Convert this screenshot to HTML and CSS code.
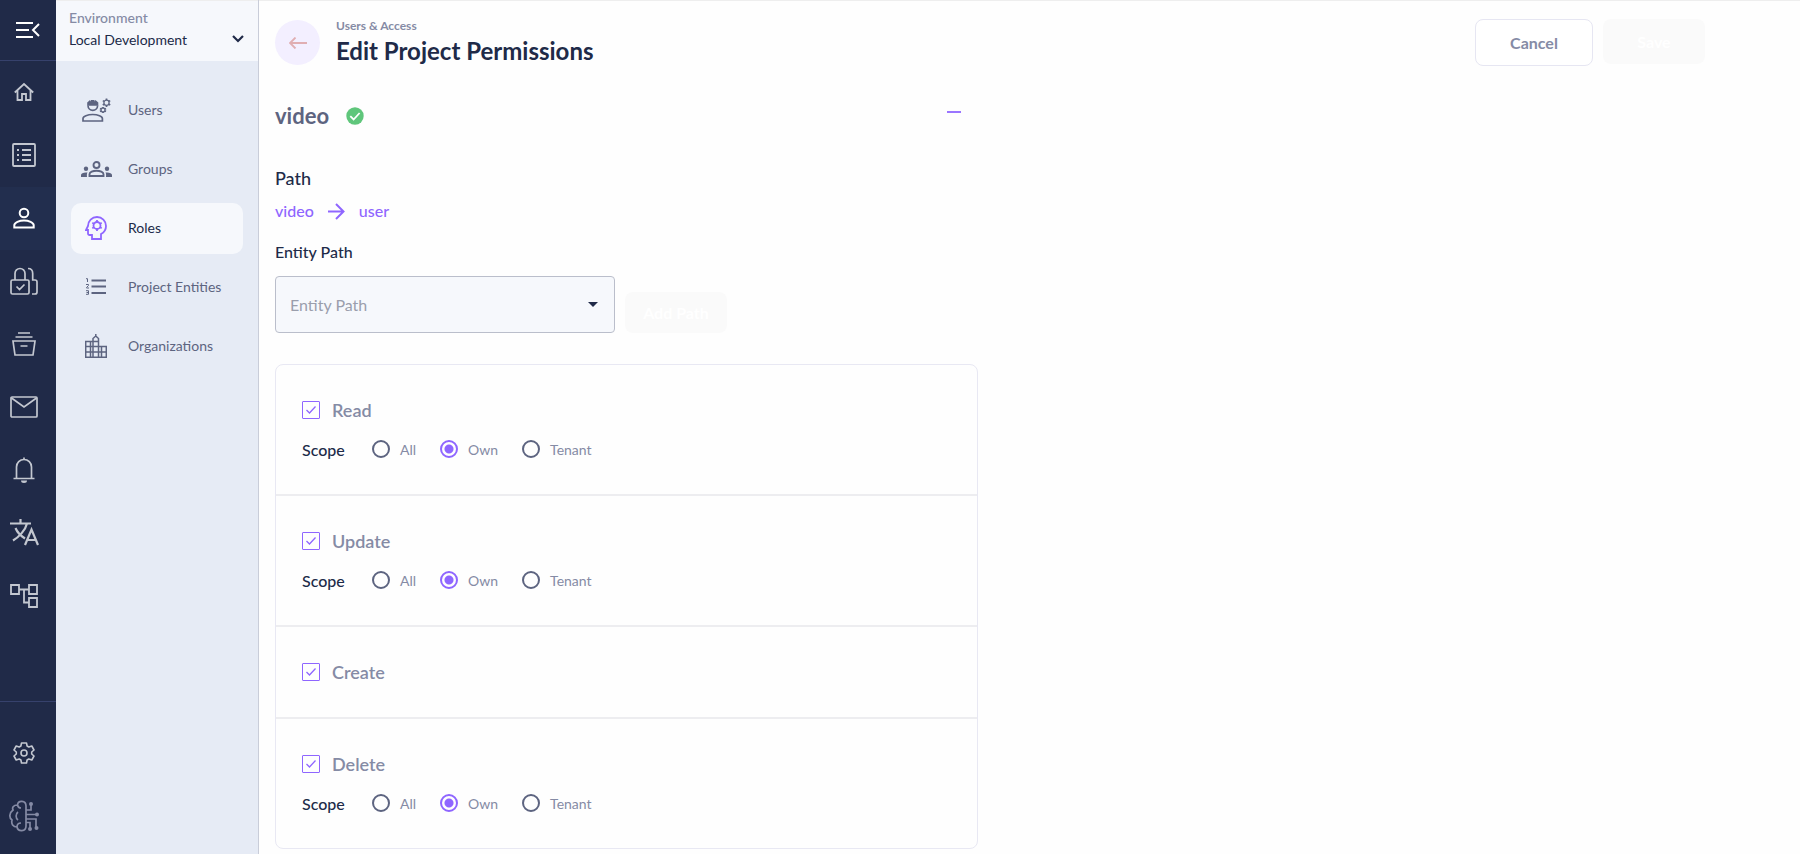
FILE: index.html
```html
<!DOCTYPE html>
<html lang="en">
<head>
    <meta charset="UTF-8">
    <meta name="viewport" content="width=device-width, initial-scale=1.0">
    <title>Edit Project Permissions</title>
    <link rel="stylesheet" href="styles.css">
</head>
<body>
    <nav class="rail">
        <button class="rail-toggle" aria-label="Collapse menu">
            <svg width="24" height="18" viewBox="0 0 24 18" fill="none" stroke="currentColor" stroke-width="2"><path d="M0 2h17M0 9h13M0 16h17M23 3l-6 6 6 6"/></svg>
        </button>
        <a class="rail-item" href="#" aria-label="Home">
            <svg width="20" height="20" viewBox="0 0 20 20" fill="none" stroke="currentColor" stroke-width="1.800"><path d="M.8 10.500L10 2l9.200 8.500M3.500 8.500V18H8v-6h4v6h4.500V8.500"/></svg>
        </a>
        <a class="rail-item" href="#" aria-label="Lists">
            <svg width="24" height="24" viewBox="0 0 24 24" fill="none" stroke="currentColor" stroke-width="1.800"><rect x="1" y="1" width="22" height="22" rx="1"/><path d="M5 7h2M5 12h2M5 17h2M10 7h9M10 12h9M10 17h9"/></svg>
        </a>
        <a class="rail-item active" href="#" aria-label="Users">
            <svg width="22" height="22" viewBox="0 0 22 22" fill="none" stroke="currentColor" stroke-width="2"><circle cx="11" cy="6" r="4.300"/><path d="M1.300 20.500v-2.300c0-2.600 5-4.700 9.700-4.700s9.700 2.100 9.700 4.700v2.300z"/></svg>
        </a>
        <a class="rail-item" href="#" aria-label="Security">
            <svg width="28" height="28" viewBox="0 0 28 28" fill="none" stroke="currentColor" stroke-width="1.700"><rect x="1" y="13" width="18" height="14" rx="1.500"/><path d="M5 13V6.500a5 5 0 0 1 10 0V13M6.500 19.500l3 3 5-5M18 1.500c3 0 4.700 2 4.700 5V13H25a2 2 0 0 1 2 2v10a2 2 0 0 1-2 2h-3"/></svg>
        </a>
        <a class="rail-item" href="#" aria-label="Archive">
            <svg width="24" height="24" viewBox="0 0 24 24" fill="none" stroke="currentColor" stroke-width="1.700"><path d="M6 1h12M3.500 5h17M1 9h22l-2 14H3zM8.500 14h7"/></svg>
        </a>
        <a class="rail-item" href="#" aria-label="Messages">
            <svg width="28" height="22" viewBox="0 0 28 22" fill="none" stroke="currentColor" stroke-width="1.700"><rect x="1" y="1" width="26" height="20" rx="1"/><path d="M1.500 2L14 11 26.500 2"/></svg>
        </a>
        <a class="rail-item" href="#" aria-label="Notifications">
            <svg width="22" height="26" viewBox="0 0 22 26" fill="none" stroke="currentColor" stroke-width="1.700"><path d="M.5 21.500h21M3.500 21V10a7.500 7.500 0 0 1 15 0v11M11 .5V3"/><path d="M8 23.500h6a3 2.500 0 0 1-6 0z" fill="currentColor" stroke="none"/></svg>
        </a>
        <a class="rail-item" href="#" aria-label="Language">
            <svg width="29" height="27" viewBox="0 0 29 27" fill="none" stroke="currentColor" stroke-width="2.200"><path d="M0 4.500h21M10.500 0v4M17 4.500C15.500 11 9 18 3 21.500M5.500 9c2 5 5.500 8 9.500 10.500M15 26l6.500-15.500L28 26M17.500 21h8"/></svg>
        </a>
        <a class="rail-item" href="#" aria-label="Workflows">
            <svg width="28" height="24" viewBox="0 0 28 24" fill="none" stroke="currentColor" stroke-width="1.800"><path d="M1 1h8v9H1zM19 1h8v9h-8zM19 14h8v9h-8zM9 5.500h10M14 5.500v13h5"/></svg>
        </a>
        <div class="rail-bottom">
            <a class="rail-item" href="#" aria-label="Settings">
                <svg width="22" height="22" viewBox="0 0 22 22" fill="none" stroke="currentColor" stroke-width="1.600" stroke-linejoin="round"><path d="M8.500 1h5l.6 3 1.700 1 3-1 2.200 4-2.300 2v2l2.300 2-2.200 4-3-1-1.700 1-.6 3h-5l-.6-3-1.700-1-3 1L1 14l2.300-2v-2L1 8l2.200-4 3 1 1.700-1z"/><circle cx="11" cy="11" r="3"/></svg>
            </a>
            <a class="rail-item dim" href="#" aria-label="Intelligence">
                <svg width="30" height="32" viewBox="0 0 30 32" fill="none" stroke="currentColor" stroke-width="1.700"><path d="M17 6c0-6-8-6-8.500-1C4 5 3 8 4 10c-4 3-4 8-1 10-1 4 1 7 5 7 1 5 9 5 9-1zM12 8c-1.500 0-3-.5-3.500-3M12 23c-2.500 0-4 1.500-4 4M9 12c-2.500 2-2.500 6 0 8M17 10h5V4M17 14.500h10M17 19h10v8M17 22.500h4V28"/><g fill="currentColor" stroke="none"><circle cx="22" cy="4" r="2"/><circle cx="28" cy="14.500" r="2"/><circle cx="27.500" cy="28" r="2"/><circle cx="21" cy="29" r="2"/></g></svg>
            </a>
        </div>
    </nav>

    <aside class="sidebar">
        <div class="environment">
            <label for="environment">Environment</label>
            <select id="environment">
                <option>Local Development</option>
            </select>
            <svg class="env-arrow" width="12" height="8" viewBox="0 0 12 8" fill="none" stroke="currentColor" stroke-width="2.200"><path d="M1 1l5 5 5-5"/></svg>
        </div>
        <div class="menu">
            <a class="menu-item" href="#">
                <span class="menu-icon"><svg width="29" height="24" viewBox="0 0 29 24" fill="none" stroke="currentColor" stroke-width="1.700"><path d="M1 23v-2.500c0-2.200 4.500-4 9.700-4s9.700 1.800 9.700 4V23zM6 7.500a4.800 4.800 0 0 0 9.600 0"/><path d="M5.200 7.800V4.500L8 2l1 1.500V2h3.500v1.500l1-1.500 2.800 2.500v3.300z" fill="currentColor" stroke="none"/><path d="M24.500 .5v1.500M24.500 7.500v1.500M20.800 2.600l1.300.8M26.900 6.200l1.300.8M20.800 7l1.300-.8M26.900 3.400l1.300-.8M21 9v1M21 14v1M18 10.500l1 .6M23 13l1 .6M18 13.500l1-.6M23 11l1-.6"/><circle cx="24.500" cy="4.800" r="2.600" stroke-width="1.300"/><circle cx="21" cy="12" r="2" stroke-width="1.300"/></svg></span>
                Users
            </a>
            <a class="menu-item" href="#">
                <span class="menu-icon"><svg width="31" height="16" viewBox="0 0 31 16" fill="none" stroke="currentColor" stroke-width="1.900"><circle cx="15.500" cy="4" r="3"/><path d="M8.500 15v-1.800c0-2 3.500-3.500 7-3.500s7 1.500 7 3.500V15z"/><g fill="currentColor" stroke="none"><circle cx="5" cy="7.700" r="2.200"/><circle cx="26" cy="7.700" r="2.200"/><path d="M0 16v-2c0-1.800 3-3 6.500-2.500C5.800 12.500 5.800 14 6 16zM31 16v-2c0-1.800-3-3-6.500-2.500.7 1 .7 2.500.5 4.500z"/></g></svg></span>
                Groups
            </a>
            <a class="menu-item selected" href="#">
                <span class="menu-icon"><svg width="22" height="24" viewBox="0 0 22 24" fill="none" stroke="currentColor" stroke-width="1.800"><path d="M7 23v-4H4.500a1.500 1.500 0 0 1-1.500-1.500V14H1l2-4c0-5 4-9 9-9s9 4 9 9c0 3.500-2 6.500-5 8v5z"/><circle cx="12" cy="9.500" r="3.500"/><path d="M12 4v2M12 13v2M7.300 6.800l1.700 1M15 11.200l1.700 1M7.300 12.200l1.700-1M15 7.800l1.700-1"/></svg></span>
                Roles
            </a>
            <a class="menu-item" href="#">
                <span class="menu-icon"><svg width="20" height="17" viewBox="0 0 20 17" fill="none" stroke="currentColor"><path d="M5.500 2.500H20M5.500 8.500H20M5.500 15H20" stroke-width="2"/><path d="M0 .7h1.500V4M0 6.500h2.500v1L.5 9.500v.5H3M0 12.700h2.500v3.600H0M.5 14.500h2"/></svg></span>
                Project Entities
            </a>
            <a class="menu-item" href="#">
                <span class="menu-icon"><svg width="22" height="24" viewBox="0 0 22 24" fill="none" stroke="currentColor" stroke-width="1.500"><path d="M.7 23.300V7.500h7M.7 12.500h20.600v10.800H.7zM.7 18h20.600M5.500 7.500v15.800M8 23V4.500L10.800 2l2.700 2.500V23M10.800 0v2M16.500 12.500v10.800M8 7.500h5.500"/></svg></span>
                Organizations
            </a>
        </div>
    </aside>

    <main class="content">
        <header class="page-header">
            <button class="back" aria-label="Back">
                <svg width="18" height="12" viewBox="0 0 18 12" fill="none" stroke="currentColor" stroke-width="1.800"><path d="M18 6H1M6.500 .5L1 6l5.500 5.500"/></svg>
            </button>
            <div class="titles">
                <span class="crumb">Users &amp; Access</span>
                <h1>Edit Project Permissions</h1>
            </div>
            <div class="actions">
                <button class="cancel">Cancel</button>
                <button class="primary save" disabled>Save</button>
            </div>
        </header>

        <form class="permissions">
            <div class="project">
                <h2>video</h2>
                <svg width="18" height="18" viewBox="0 0 18 18"><circle cx="9" cy="9" r="8.700" fill="#5fc67b"/><path d="M4.300 9.200l3.300 3.300 6-6.500" fill="none" stroke="#fff" stroke-width="1.800"/></svg>
                <button class="collapse" type="button" aria-label="Collapse"></button>
            </div>

            <h3>Path</h3>
            <div class="path">
                <span>video</span>
                <svg width="17" height="17" viewBox="0 0 17 17" fill="none" stroke="currentColor" stroke-width="2"><path d="M0 8.500h16M8 1l7.500 7.500L8 16"/></svg>
                <span>user</span>
            </div>

            <label class="field-label" for="entityPath">Entity Path</label>
            <div class="field-row">
                <div class="select">
                    <select id="entityPath">
                        <option>Entity Path</option>
                    </select>
                    <svg class="caret" width="10" height="5" viewBox="0 0 10 5"><path d="M0 0h10L5 5z" fill="currentColor"/></svg>
                </div>
                <button class="primary add-path" type="button" disabled>Add Path</button>
            </div>

            <div class="card">
                <section>
                    <label class="permission"><input type="checkbox" checked><svg class="tick" width="10" height="8" viewBox="0 0 10 8"><path d="M.5 4l3 3 6-6.500"/></svg>Read</label>
                    <div class="scope" role="radiogroup" aria-label="Read scope">
                        <span class="scope-name">Scope</span>
                        <label><input type="radio" name="read">All</label>
                        <label><input type="radio" name="read" checked>Own</label>
                        <label><input type="radio" name="read">Tenant</label>
                    </div>
                </section>
                <section>
                    <label class="permission"><input type="checkbox" checked><svg class="tick" width="10" height="8" viewBox="0 0 10 8"><path d="M.5 4l3 3 6-6.500"/></svg>Update</label>
                    <div class="scope" role="radiogroup" aria-label="Update scope">
                        <span class="scope-name">Scope</span>
                        <label><input type="radio" name="update">All</label>
                        <label><input type="radio" name="update" checked>Own</label>
                        <label><input type="radio" name="update">Tenant</label>
                    </div>
                </section>
                <section>
                    <label class="permission"><input type="checkbox" checked><svg class="tick" width="10" height="8" viewBox="0 0 10 8"><path d="M.5 4l3 3 6-6.500"/></svg>Create</label>
                </section>
                <section>
                    <label class="permission"><input type="checkbox" checked><svg class="tick" width="10" height="8" viewBox="0 0 10 8"><path d="M.5 4l3 3 6-6.500"/></svg>Delete</label>
                    <div class="scope" role="radiogroup" aria-label="Delete scope">
                        <span class="scope-name">Scope</span>
                        <label><input type="radio" name="delete">All</label>
                        <label><input type="radio" name="delete" checked>Own</label>
                        <label><input type="radio" name="delete">Tenant</label>
                    </div>
                </section>
            </div>
        </form>
    </main>
</body>
</html>
```
FILE: styles.css
```css
* {
    box-sizing: border-box;
}
body {
    display: flex;
    min-height: 100vh;
    margin: 0;
    background-color: #fefefe;
    color: #202a48;
    font-family: Lato, "Liberation Sans", sans-serif;
    font-size: 14px;
}
button, select {
    font-family: inherit;
}
button {
    border: none;
    cursor: pointer;
}
a {
    text-decoration: none;
}
svg {
    flex-shrink: 0;
}

/* dark icon rail */
.rail {
    width: 56px;
    flex-shrink: 0;
    display: flex;
    flex-direction: column;
    background-color: #202a48;
    color: #c3c7d0;
}
.rail-toggle {
    height: 61px;
    padding: 2px 0 0;
    background: none;
    color: white;
    border-bottom: 1px solid #36416c;
}
.rail-item {
    height: 63px;
    padding: 0 8px 2px 0;
    display: flex;
    align-items: center;
    justify-content: center;
    color: inherit;
}
.rail-item.active {
    background-color: #222e4e;
    color: white;
}
.rail-item.dim {
    color: #858ba5;
}
.rail-bottom {
    margin-top: auto;
    padding: 20px 0 6px;
    border-top: 1px solid #36416c;
}

/* sidebar */
.sidebar {
    width: 203px;
    flex-shrink: 0;
    background-color: #e6ebf5;
    border-right: 1px solid #c9cdd9;
}
.environment {
    position: relative;
    height: 61px;
    padding: 8px 13px;
    background-color: #f6f8fc;
    border-top: 1px solid #eeeeee;
}
.environment label {
    display: block;
    line-height: 18px;
    color: #858ba5;
    font-weight: 500;
}
.environment select {
    display: block;
    width: 100%;
    height: 24px;
    padding: 0;
    border: none;
    background: none;
    appearance: none;
    color: #202a48;
    font-size: 14px;
}
.env-arrow {
    position: absolute;
    right: 14px;
    top: 34px;
    pointer-events: none;
}
.menu {
    display: flex;
    flex-direction: column;
    gap: 8px;
    padding: 24px 15px;
}
.menu-item {
    display: flex;
    align-items: center;
    gap: 16px;
    height: 51px;
    padding: 0 0 2px 9px;
    border-radius: 10px;
    color: #5d6480;
}
.menu-item.selected {
    background-color: #f6f8fc;
    color: #202a48;
}
.menu-icon {
    width: 32px;
    display: flex;
    justify-content: center;
}
.selected .menu-icon {
    color: #8f66ff;
}

/* page */
.content {
    flex: 1;
    padding: 0 95px 4px 16px;
    border-top: 1px solid #eeeeee;
}
.page-header {
    display: flex;
    align-items: center;
    padding-top: 18px;
}
.back {
    width: 45px;
    height: 45px;
    display: flex;
    align-items: center;
    justify-content: center;
    border-radius: 50%;
    background-color: #f3efff;
    color: #e0aeb2;
}
.titles {
    flex: 1;
    padding-left: 16px;
}
.crumb {
    display: block;
    line-height: 12px;
    font-size: 12px;
    font-weight: 700;
    color: #858ba5;
}
h1 {
    margin: 4px 0 0;
    font-size: 24px;
    line-height: 30px;
}
.actions {
    display: flex;
    gap: 10px;
}
.cancel, .primary {
    border-radius: 8px;
    font-size: 16px;
    font-weight: 700;
}
.cancel {
    width: 118px;
    height: 47px;
    border: 1px solid #e6e6f2;
    background-color: white;
    color: #858ba5;
}
.primary {
    width: 102px;
    background-color: #fafafa;
    color: white;
}
.save {
    height: 45px;
}
.permissions {
    max-width: 703px;
    padding-top: 37px;
}
.project {
    display: flex;
    align-items: center;
    gap: 17px;
    height: 26px;
}
h2 {
    margin: 0;
    font-size: 22px;
    line-height: 26px;
    color: #5d6480;
}
.collapse {
    width: 14px;
    height: 2px;
    margin: 0 17px 8px auto;
    padding: 0;
    background-color: #9a75ff;
}
h3 {
    margin: 37px 0 0;
    font-size: 18px;
    line-height: 24px;
    font-weight: 500;
}
.path {
    display: flex;
    align-items: center;
    gap: 14px;
    margin-top: 9px;
    font-size: 16px;
    line-height: 24px;
    font-weight: 500;
    color: #8f66ff;
}
.field-label {
    display: block;
    margin-top: 17px;
    font-size: 16px;
    line-height: 24px;
    font-weight: 500;
}
.field-row {
    display: flex;
    align-items: flex-end;
    gap: 10px;
    margin-top: 12px;
}
.select {
    position: relative;
    width: 340px;
}
.select select {
    display: block;
    width: 100%;
    height: 57px;
    padding: 0 14px;
    appearance: none;
    border: 1px solid #babecb;
    border-radius: 4px;
    background-color: #f6f8fc;
    color: #9a9eac;
    font-size: 16px;
}
.caret {
    position: absolute;
    right: 17px;
    top: 26px;
    pointer-events: none;
}
.add-path {
    height: 41px;
}

/* permission card */
.card {
    margin-top: 31px;
    border: 1px solid #e8e8f3;
    border-radius: 8px;
}
section {
    padding: 33px 26px;
    border-bottom: 2px solid #ededf0;
}
section:last-child {
    border-bottom: none;
}
.permission {
    position: relative;
    display: flex;
    align-items: center;
    gap: 12px;
    font-size: 18px;
    line-height: 24px;
    font-weight: 600;
    color: #858ba5;
}
input {
    flex-shrink: 0;
    width: 18px;
    height: 18px;
    margin: 0;
    appearance: none;
}
input[type="checkbox"] {
    border: 1px solid #8f66ff;
    border-radius: 1px;
}
.tick {
    position: absolute;
    left: 4px;
    top: 8px;
    fill: none;
    stroke: #8f66ff;
    stroke-width: 1.3;
    pointer-events: none;
}
input:not(:checked) + .tick {
    display: none;
}
.scope {
    display: flex;
    align-items: center;
    gap: 24px;
    height: 24px;
    margin-top: 15px;
}
.scope label {
    display: flex;
    align-items: center;
    gap: 10px;
    color: #858ba5;
}
.scope-name {
    min-width: 46px;
    font-size: 16px;
    font-weight: 500;
}
input[type="radio"] {
    border: 2px solid #5d6480;
    border-radius: 50%;
}
input[type="radio"]:checked {
    border-color: #8f66ff;
    background: radial-gradient(#8f66ff 4px, transparent 5px);
}
```
